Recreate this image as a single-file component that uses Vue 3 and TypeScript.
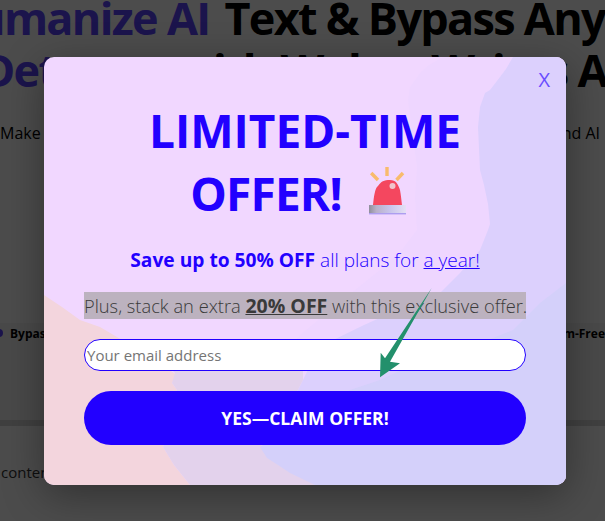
<script setup lang="ts">
const leftFeature = 'Bypass AI Detectors'
const rightFeature = 'Spam-Free'
</script>

<template>
  <div class="page">
    <header class="hero">
      <h1 class="line"><span class="accent">Humanize AI</span> Text &amp; Bypass Any</h1>
      <h1 class="line second"><span class="accent plain">Detect</span><span>with Walter Writes AI</span></h1>
      <p class="lead"><span>Make your text human</span><span>and AI</span></p>
    </header>
    <section class="lower">
      <div class="features">
        <span class="left"><i class="dot"></i><b>{{ leftFeature }}</b></span>
        <b>{{ rightFeature }}</b>
      </div>
      <div class="band"></div>
    </section>
    <div class="foot">content</div>

    <div class="overlay"></div>
    <section class="modal">
      <svg class="wash" viewBox="0 0 522 428" preserveAspectRatio="none" aria-hidden="true">
        <path class="faint" d="M399 0 L385 8 L376 16 L366 30 L364 43 L368 75 L373 110 L371 140 L373 173 L356 195 L336 213 L296 245 L256 278 L220 320 L522 428 L522 0 Z" />
        <path class="w2" d="M469 0 L462 12 L456 20 L446 33 L441 36 L436 50 L434 70 L436 113 L440 128 L444 147 L446 167 L444 173 L436 193 L416 216 L396 236 L360 250 L320 268 L275 290 L259 323 L240 360 L217 388 L271 428 L522 428 L522 0 Z" />
        <path class="pink" d="M0 238 L18 250 L36 263 L56 270 L73 280 L100 296 L133 318 L128 326 L133 333 L126 360 L119 390 L130 408 L146 428 L0 428 Z" />
        <path class="mix" d="M131 316 L128 326 L133 333 L126 360 L119 390 L130 408 L146 428 L271 428 L217 388 L240 360 L259 323 L259 310 L125 310 Z" />
        <path class="w3" d="M522 226 L509 236 L496 246 L469 273 L436 286 L400 300 L368 308 L336 323 L306 333 L262 360 L216 390 L223 401 L234 408 L246 416 L271 428 L522 428 Z" />
      </svg>

      <button class="close" type="button">X</button>

      <h2 class="title">
        LIMITED-TIME<br /><span class="offer">OFFER!</span>
        <svg class="alarm" viewBox="0 0 40 50" aria-hidden="true">
          <defs>
            <linearGradient id="baseGrad" x1="0" x2="1" y1="0" y2="0">
              <stop offset="0" stop-color="#8f8f9c" />
              <stop offset="0.2" stop-color="#b9b0c9" />
              <stop offset="0.55" stop-color="#c7c3ea" />
              <stop offset="1" stop-color="#e4e0f4" />
            </linearGradient>
          </defs>
          <g stroke="#f8bb6c" stroke-width="3.400" fill="none">
            <path d="M3.200 7 L10 14" />
            <path d="M19 1 L19 10" />
            <path d="M35 7 L28.500 14" />
          </g>
          <path d="M5 39 C6 30 7 22 10 20 C13 15.500 16 14 22 14 C28 14 30 18 32 24 C33 29 33.500 35 34 39 Z" fill="#f4475f" />
          <circle cx="24.500" cy="20" r="3" fill="#f0c4cc" />
          <rect x="1" y="39" width="37" height="8" fill="url(#baseGrad)" />
          <rect x="1" y="47" width="37" height="1.400" fill="#ad9df0" />
        </svg>
      </h2>

      <p class="save"><strong>Save up to 50% OFF</strong> all plans for <u>a year!</u></p>
      <p class="stack"><mark>Plus, stack an extra <strong><u>20% OFF</u></strong> with this exclusive offer.</mark></p>

      <form class="form" @submit.prevent>
        <input class="email" type="email" placeholder="Your email address" />
        <button class="cta" type="submit">YES—CLAIM OFFER!</button>
      </form>

      <svg class="arrow" viewBox="0 0 56 94" aria-hidden="true">
        <path d="M52.700 1 L6 71.300 L1.700 65.700 L1 90.300 L21 76.300 L11 74.700 Z" fill="#23906c" />
      </svg>
    </section>
  </div>
</template>

<style scoped>
.page {
  position: relative;
  width: 605px;
  height: 521px;
  overflow: hidden;
  background: #fff;
  font-family: "Open Sans", "Noto Sans", sans-serif;
  color: #000;
}
.hero {
  display: flex;
  flex-direction: column;
  margin-top: -8px;
}
.line {
  margin: 0;
  width: 605px;
  display: flex;
  justify-content: flex-end;
  white-space: pre;
  font-size: 45px;
  line-height: 52px;
  font-weight: 700;
  letter-spacing: -1.700px;
}
.accent { color: #5d43ff; margin-right: 5px; }
.second {
  justify-content: space-between;
  width: 638px;
  margin-left: -18px;
}
.plain { margin: 0; }
.lead {
  margin: 25px 0 0;
  padding-right: 5px;
  display: flex;
  justify-content: space-between;
  white-space: pre;
  font-size: 16px;
  line-height: 24px;
}
.lower {
  margin-top: 178px;
  background: #f6f6f6;
}
.features {
  display: flex;
  justify-content: space-between;
  align-items: center;
  height: 20px;
  font-size: 12px;
  white-space: nowrap;
}
.left {
  display: flex;
  align-items: center;
  gap: 7px;
}
.dot {
  width: 8px;
  height: 8px;
  margin-left: -5px;
  border-radius: 50%;
  background: #5d43ff;
}
.band {
  height: 6px;
  margin-top: 77px;
  margin-bottom: 29px;
  background: #d5d5d5;
}
.foot {
  padding: 6px 0 0 1px;
  border-top: 1px solid #fff;
  font-size: 15px;
  line-height: 20px;
  color: #333;
}
.overlay {
  position: absolute;
  inset: 0;
  background: rgba(0, 0, 0, 0.7);
}
.modal {
  position: absolute;
  left: 44px;
  top: 57px;
  width: 522px;
  height: 428px;
  box-sizing: border-box;
  padding: 42px 40px 0;
  border-radius: 10px;
  overflow: hidden;
  background: #f1d7ff;
  box-shadow: 0 10px 40px rgba(0, 0, 0, 0.36);
  text-align: center;
}
.wash {
  position: absolute;
  inset: 0;
  width: 100%;
  height: 100%;
}
.faint { fill: #eed6ff; }
.w2 { fill: #dcd0fd; }
.pink { fill: #f3d5dd; }
.mix { fill: #e3d2ec; }
.w3 { fill: #d4d0fa; }
.close {
  position: absolute;
  top: 11px;
  right: 16px;
  padding: 0;
  border: 0;
  background: none;
  color: #6a4dff;
  font: 500 20px/24px "Open Sans", sans-serif;
}
.title {
  position: relative;
  margin: 0;
  color: #2200ff;
  font-size: 46px;
  line-height: 63px;
  font-weight: 700;
}
.offer { letter-spacing: -0.800px; }
.alarm {
  width: 40px;
  height: 50px;
  margin-top: -10px;
  margin-left: 26px;
  margin-right: 12px;
  vertical-align: -5px;
}
.save {
  position: relative;
  margin: 21px 0 0;
  color: #2200ff;
  font-size: 19px;
  line-height: 27px;
  font-weight: 300;
  white-space: nowrap;
}
.save strong { font-weight: 700; font-size: 19.200px; }
.stack {
  position: relative;
  margin: 18px 0 0;
  color: #3a3a3a;
  font-size: 18.300px;
  line-height: 27px;
  font-weight: 300;
  white-space: nowrap;
}
.stack mark {
  display: block;
  background: #bcb2bf;
  color: inherit;
}
.stack strong { font-weight: 700; font-size: 19.500px; }
.form {
  position: relative;
  display: flex;
  flex-direction: column;
  gap: 20px;
  margin-top: 20px;
}
.email {
  box-sizing: border-box;
  width: 100%;
  height: 32px;
  padding: 0 2px;
  border: 1px solid #2200ff;
  border-radius: 16px;
  outline: 0;
  background: #fff;
  font-family: inherit;
  font-size: 15px;
}
.email::placeholder { color: #757575; }
.cta {
  height: 54px;
  border: 0;
  border-radius: 27px;
  background: #2200ff;
  color: #fff;
  font-family: inherit;
  font-size: 17.500px;
  font-weight: 700;
}
.arrow {
  position: absolute;
  left: 335px;
  top: 230px;
  width: 56px;
  height: 94px;
}
</style>

<style>
body { background: #4d4d4d; }
</style>
